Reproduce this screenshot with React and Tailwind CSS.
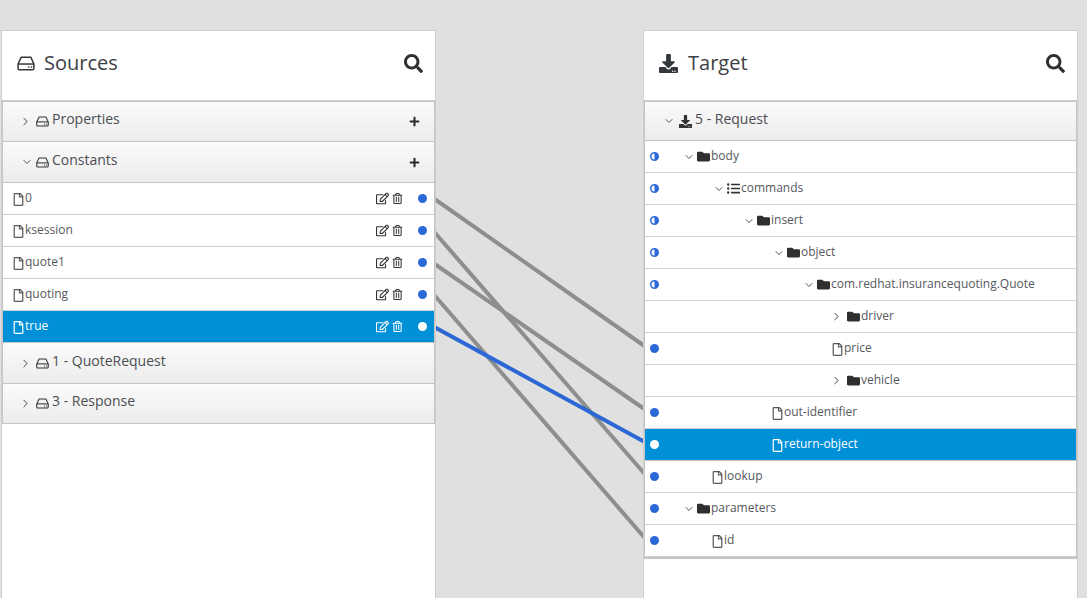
import React from "react";
import { FaSearch, FaPlus, FaDownload, FaFolder, FaListUl, FaRegTrashAlt, FaRegEdit, FaRegFile } from "react-icons/fa";
import { ChevronRight, ChevronDown } from "lucide-react";

function Hdd({ w, h, className = "" }) {
  return (
    <svg width={w} height={h} viewBox="0 0 17 14" fill="none" stroke="currentColor" strokeWidth="1.4" className={`shrink-0 ${className}`}>
      <path d="M4 1 H13 L16 7.5 V11.5 A1.5 1.5 0 0 1 14.5 13 H2.5 A1.5 1.5 0 0 1 1 11.5 V7.5 Z" strokeLinejoin="round" />
      <path d="M1 7.5 H16" />
      <circle cx="11" cy="10.3" r="0.8" fill="currentColor" stroke="none" />
      <circle cx="13.7" cy="10.3" r="0.8" fill="currentColor" stroke="none" />
    </svg>
  );
}

function Chevron({ open, className = "" }) {
  return open ? (
    <ChevronDown size={12} strokeWidth={1.7} className={`shrink-0 text-[#333] ${className}`} />
  ) : (
    <ChevronRight size={13} strokeWidth={1.7} className={`shrink-0 text-[#333] -ml-[4px] mr-[1px] ${className}`} />
  );
}

function PanelHeader({ icon, title, iconWidth }) {
  return (
    <div className="h-[70px] flex items-center justify-between pl-[15px] pr-[12px] pb-[5px] border-b border-[#cfcfcf] shrink-0">
      <div className="flex items-center">
        <span className={`${iconWidth} flex items-center`}>{icon}</span>
        <span className="text-[20px] leading-[26px] text-[#3d4045]">{title}</span>
      </div>
      <FaSearch size={19} className="text-[#2f3033]" />
    </div>
  );
}

function Group({ label, open, icon, plus, height }) {
  return (
    <div className={`${height} flex items-center pr-[14px] bg-gradient-to-b from-[#fbfbfb] to-[#ececec] border-b border-[#c4c4c4] last:border-b-0`}>
      <span className={`${icon === "dl" ? "w-[34px] pr-[4px]" : "w-[33px] pr-[3px]"} flex justify-end shrink-0`}>
        <Chevron open={open} />
      </span>
      <span className="w-[16px] flex shrink-0">
        {icon === "dl" ? <FaDownload size={13} className="text-[#333]" /> : <Hdd w={13} h={11} className="text-[#333]" />}
      </span>
      <span className="text-[14px] leading-[20px] text-[#4b4e52] -mt-[5px]">{label}</span>
      {plus && <FaPlus size={11} className="ml-auto text-[#2b2b2b]" />}
    </div>
  );
}

function SourceRow({ label, selected }) {
  return (
    <div className={`h-[32px] flex items-center border-b pl-[9px] pr-[7px] ${selected ? "bg-[#0090d8] border-[#c8c8c8] text-white" : "bg-white border-[#d1d1d1] text-[#55585c]"}`}>
      <FaRegFile size={13} className={`shrink-0 mt-[1px] ${selected ? "text-white" : "text-[#55585c]"}`} />
      <span className="text-[12px] leading-[16px] -mt-[1px]">{label}</span>
      <FaRegEdit size={13} className={`ml-auto ${selected ? "text-white" : "text-[#333]"}`} />
      <FaRegTrashAlt size={11} className={`ml-[3px] ${selected ? "text-white" : "text-[#333]"}`} />
      <span className={`ml-[15px] w-[9px] h-[9px] rounded-full ${selected ? "bg-white" : "bg-[#2b6ad6]"}`} />
    </div>
  );
}

const targetRows = [
  { label: "body", kind: "folder", open: true, level: 1, mark: "half" },
  { label: "commands", kind: "list", open: true, level: 2, mark: "half" },
  { label: "insert", kind: "folder", open: true, level: 3, mark: "half" },
  { label: "object", kind: "folder", open: true, level: 4, mark: "half" },
  { label: "com.redhat.insurancequoting.Quote", kind: "folder", open: true, level: 5, mark: "half" },
  { label: "driver", kind: "folder", open: false, level: 6, mark: "none" },
  { label: "price", kind: "file", level: 6, mark: "dot" },
  { label: "vehicle", kind: "folder", open: false, level: 6, mark: "none" },
  { label: "out-identifier", kind: "file", level: 4, mark: "dot" },
  { label: "return-object", kind: "file", level: 4, mark: "white", selected: true },
  { label: "lookup", kind: "file", level: 2, mark: "dot" },
  { label: "parameters", kind: "folder", open: true, level: 1, mark: "dot" },
  { label: "id", kind: "file", level: 2, mark: "dot" },
];

function Mark({ type }) {
  if (type === "half")
    return (
      <svg width="9" height="9" viewBox="0 0 9 9" className="shrink-0">
        <circle cx="4.5" cy="4.5" r="4.5" fill="#2b6ad6" />
        <path d="M4.5 1.5 A3 3 0 0 0 4.5 7.5 Z" fill="#fff" />
      </svg>
    );
  if (type === "none") return <span className="w-[9px] h-[9px] shrink-0" />;
  return <span className={`w-[9px] h-[9px] rounded-full shrink-0 ${type === "white" ? "bg-white" : "bg-[#2b6ad6]"}`} />;
}

function TargetRow({ row }) {
  const { label, kind, open, level, mark, selected } = row;
  const pad = kind === "file" ? 30 * level - 8 : 30 * level - 5;
  const text = selected ? "text-white" : "text-[#55585c]";
  return (
    <div className={`h-[32px] flex items-center border-b pl-[5px] ${selected ? "bg-[#0090d8] border-[#c8c8c8]" : "bg-white border-[#d1d1d1]"} ${text}`}>
      <Mark type={mark} />
      <span className="shrink-0" style={{ width: pad }} />
      {kind === "file" ? (
        <FaRegFile size={13} className="shrink-0 mt-[1px]" />
      ) : (
        <>
          <span className="w-[9px] flex justify-center shrink-0 mr-[4px]">
            <Chevron open={open} />
          </span>
          {kind === "list" ? (
            <FaListUl size={13} className="shrink-0 mr-[1px] text-[#333]" />
          ) : (
            <FaFolder size={13} className="shrink-0 mr-[1px] text-[#2f2f2f]" />
          )}
        </>
      )}
      <span className="text-[12px] leading-[16px] -mt-[1px]">{label}</span>
    </div>
  );
}

const lines = [
  { x1: 426, y1: 193, x2: 653, y2: 352, c: "#8e8e8e" },
  { x1: 426, y1: 222.5, x2: 653, y2: 483.5, c: "#8e8e8e" },
  { x1: 426, y1: 258, x2: 653, y2: 415, c: "#8e8e8e" },
  { x1: 426, y1: 285.5, x2: 653, y2: 547.5, c: "#8e8e8e" },
  { x1: 426, y1: 322.5, x2: 653, y2: 446.5, c: "#2b68d6" },
];

export default function App() {
  return (
    <div
      className="relative w-[1087px] h-[598px] overflow-hidden bg-[#e0e0e0] flex items-start pt-[30px] pl-[1px] gap-[207px]"
      style={{ fontFamily: '"Open Sans", sans-serif' }}
    >
      <svg className="absolute left-0 top-0 pointer-events-none" width="1087" height="598">
        {lines.map((l, i) => (
          <line key={i} x1={l.x1} y1={l.y1} x2={l.x2} y2={l.y2} stroke={l.c} strokeWidth="4" />
        ))}
      </svg>

      <section className="relative w-[435px] h-[568px] bg-white border border-b-0 border-[#cfcfcf] flex flex-col">
        <PanelHeader icon={<Hdd w={18} h={15} className="text-[#33363a]" />} iconWidth="w-[27px]" title="Sources" />
        <div className="border border-[#c4c4c4]">
          <Group label="Properties" icon="hdd" plus height="h-[40px]" />
          <Group label="Constants" icon="hdd" open plus height="h-[41px]" />
          <SourceRow label="0" />
          <SourceRow label="ksession" />
          <SourceRow label="quote1" />
          <SourceRow label="quoting" />
          <SourceRow label="true" selected />
          <Group label="1 - QuoteRequest" icon="hdd" height="h-[41px]" />
          <Group label="3 - Response" icon="hdd" height="h-[39px]" />
        </div>
      </section>

      <section className="relative w-[435px] h-[568px] bg-white border border-b-0 border-[#cfcfcf] flex flex-col">
        <PanelHeader icon={<FaDownload size={19} className="text-[#33363a]" />} iconWidth="w-[29px]" title="Target" />
        <div className="border border-[#c4c4c4] border-b-[2px]">
          <Group label="5 - Request" icon="dl" open height="h-[39px]" />
          {targetRows.map((r) => (
            <TargetRow key={r.label} row={r} />
          ))}
        </div>
      </section>
    </div>
  );
}
